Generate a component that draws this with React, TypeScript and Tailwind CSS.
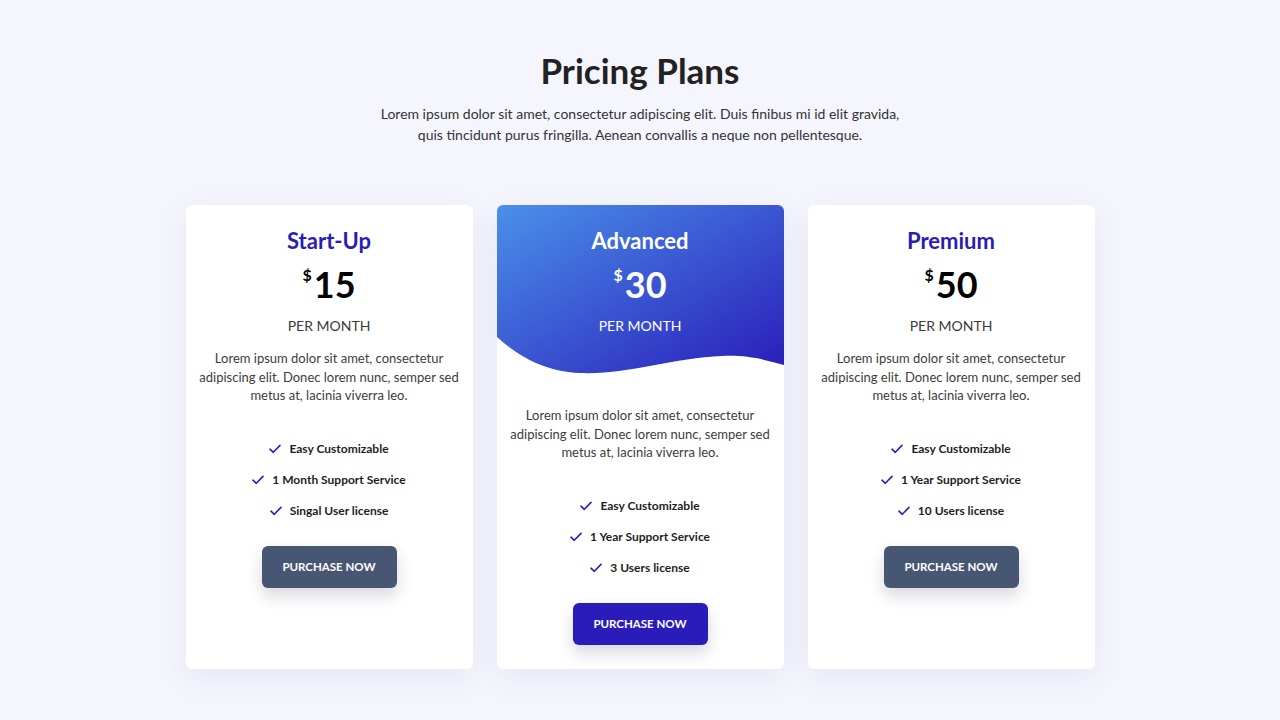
import React from 'react';

type Plan = {
  name: string;
  price: string;
  features: string[];
  featured?: boolean;
};

const plans: Plan[] = [
  { name: 'Start-Up', price: '15', features: ['Easy Customizable', '1 Month Support Service', 'Singal User license'] },
  { name: 'Advanced', price: '30', features: ['Easy Customizable', '1 Year Support Service', '3 Users license'], featured: true },
  { name: 'Premium', price: '50', features: ['Easy Customizable', '1 Year Support Service', '10 Users license'] },
];

const font = { fontFamily: 'Lato, "Noto Sans", sans-serif' };

function Check() {
  return (
    <svg width="12" height="10" viewBox="0 0 12 10" fill="none" className="shrink-0">
      <path d="M1 5.2 L4.3 8.3 L11 1.4" stroke="#2b1db3" strokeWidth="1.6" strokeLinecap="round" strokeLinejoin="round" />
    </svg>
  );
}

function Wave() {
  return (
    <svg className="absolute inset-0 w-full h-full" viewBox="0 0 287 170" preserveAspectRatio="none">
      <defs>
        <linearGradient id="hdr" x1="0" y1="0" x2="1" y2="1">
          <stop offset="0" stopColor="#4a90ea" />
          <stop offset="1" stopColor="#2a1cb9" />
        </linearGradient>
      </defs>
      <path
        d="M0 0 H287 V160 C265 154 250 150 225 151 C175 153 130 170 83 168 C45 166 20 150 0 132 Z"
        fill="url(#hdr)"
      />
    </svg>
  );
}

function PriceHead({ plan }: { plan: Plan }) {
  const light = plan.featured;
  return (
    <div className="relative flex flex-col items-center">
      <h2 className={`text-[22px] leading-[28px] font-bold ${light ? 'text-white' : 'text-[#2b1db3]'}`}>{plan.name}</h2>
      <div className={`mt-[9px] flex items-start leading-[40px] font-bold ${light ? 'text-white' : 'text-black'}`}>
        <span className="text-[16px] leading-[20px] mt-[1px] mr-[2px]">$</span>
        <span className="text-[36px]">{plan.price}</span>
      </div>
      <div className={`mt-[12px] text-[14px] leading-[20px] ${light ? 'text-white' : 'text-[#3a3a3a]'}`}>PER MONTH</div>
    </div>
  );
}

function Card({ plan }: { plan: Plan }) {
  return (
    <div className="w-[287px] h-[464px] bg-white rounded-md overflow-hidden shadow-[0_8px_30px_rgba(60,60,140,0.08)] flex flex-col items-center">
      {plan.featured ? (
        <div className="relative w-full h-[170px] pt-[22px]">
          <Wave />
          <PriceHead plan={plan} />
        </div>
      ) : (
        <div className="w-full pt-[22px]">
          <PriceHead plan={plan} />
        </div>
      )}
      <p className={`${plan.featured ? 'mt-[31px]' : 'mt-[13px]'} px-3 text-center text-[13px] leading-[18.5px] text-[#3c3c3c]`}>
        Lorem ipsum dolor sit amet, consectetur adipiscing elit. Donec lorem nunc, semper sed metus at, lacinia viverra leo.
      </p>
      <ul className="mt-[29px] flex flex-col items-center">
        {plan.features.map((f) => (
          <li key={f} className="h-[31px] flex items-center gap-[8px] text-[12px] font-bold text-[#1e1e1e]">
            <Check />
            <span>{f}</span>
          </li>
        ))}
      </ul>
      <button
        className={`mt-[19px] w-[135px] h-[42px] rounded-md text-white text-[11.5px] font-bold shadow-[0_8px_16px_rgba(40,40,80,0.18)] ${
          plan.featured ? 'bg-[#2a1bbb]' : 'bg-[#475673]'
        }`}
      >
        PURCHASE NOW
      </button>
    </div>
  );
}

export default function App() {
  return (
    <div style={font} className="w-full min-h-[720px] bg-[#f5f5fd] flex flex-col items-center">
      <h1 className="mt-[50px] text-[35px] leading-[40px] font-bold text-[#222]">Pricing Plans</h1>
      <p className="mt-[13px] w-[540px] text-center text-[14px] leading-[21px] text-[#333]">
        Lorem ipsum dolor sit amet, consectetur adipiscing elit. Duis finibus mi id elit gravida, quis tincidunt purus fringilla. Aenean convallis a neque non pellentesque.
      </p>
      <div className="mt-[60px] flex gap-[24px]">
        {plans.map((p) => (
          <Card key={p.name} plan={p} />
        ))}
      </div>
    </div>
  );
}
